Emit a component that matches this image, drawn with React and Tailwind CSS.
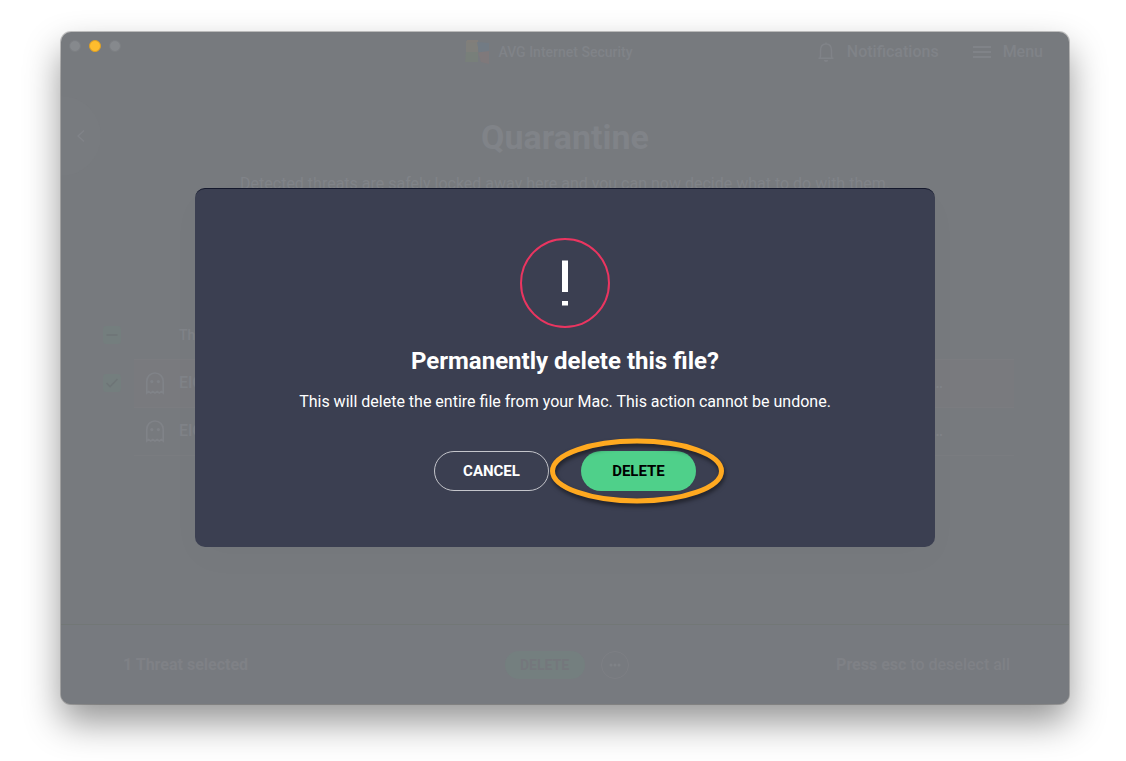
import React from 'react';

function Ghost() {
  return (
    <svg viewBox="0 0 20 24" className="block h-6 w-5" fill="none" stroke="currentColor" strokeWidth="1.6" aria-hidden="true">
      <path d="M1.8 22V10.200a8.2 8.2 0 0 1 16.4 0V22l-1.800-1.500-2.100 1.500-2.150-1.500-2.150 1.500-2.150-1.500L5.700 22l-2.100-1.500z" />
      <circle cx="6.8" cy="10.6" r="1.6" fill="currentColor" stroke="none" />
      <circle cx="13.4" cy="10.6" r="1.6" fill="currentColor" stroke="none" />
    </svg>
  );
}

function Tick({ label, children, ...props }) {
  return (
    <label className="relative block size-[18px]">
      <input
        type="checkbox"
        aria-label={label}
        className="block size-[18px] appearance-none rounded-[3px] bg-[#747e7e]"
        {...props}
      />
      <svg viewBox="0 0 18 18" className="pointer-events-none absolute inset-0" fill="none" stroke="#6e7577" strokeWidth="1.6" aria-hidden="true">
        {children}
      </svg>
    </label>
  );
}

function Header() {
  return (
    <header className="grid h-10 grid-cols-[1fr_auto_1fr] items-center">
      <div className="flex gap-2 self-start pt-2 pl-2">
        <button aria-label="Close" className="size-3 rounded-full border border-[#7c7f83] bg-[#86898d]" />
        <button aria-label="Minimize" className="size-3 rounded-full border border-[#dfa023] bg-[#febc2e]" />
        <button aria-label="Zoom" className="size-3 rounded-full border border-[#7c7f83] bg-[#86898d]" />
      </div>
      <div className="flex items-center gap-[9px] pr-8 text-sm font-medium">
        <svg viewBox="0 0 24 24" className="size-6" aria-hidden="true">
          <path d="M1 1h12v12H1z" fill="#7f7f7b" />
          <path d="M2 0h11v2.500H2z" fill="#827e7a" />
          <path d="M1 12h12v10H0z" fill="#787f7a" />
          <path d="M12 2l12 1v9l-10 1z" fill="#727b84" />
          <path d="M13 12.500l11-1.500v13l-8-2z" fill="#7f797b" />
        </svg>
        AVG Internet Security
      </div>
      <nav className="flex items-center justify-end gap-[34px] pr-[26px] font-medium">
        <button className="flex items-center gap-3">
          <svg viewBox="0 0 18 20" className="h-5 w-[18px]" fill="none" stroke="currentColor" strokeWidth="1.5" aria-hidden="true">
            <path d="M1.500 16.200h15M3.200 16c0-1 .3-1.500.3-2.500V8.600C3.500 4.500 5.500 2 9 2s5.500 2.500 5.500 6.600v4.900c0 1 .3 1.500.3 2.500M9 .5v2" />
            <path d="M6.800 18h4.400a2.200 1.900 0 0 1-4.400 0z" fill="currentColor" stroke="none" />
          </svg>
          Notifications
        </button>
        <button className="flex items-center gap-3">
          <svg viewBox="0 0 18 14" className="h-[14px] w-[18px]" stroke="currentColor" strokeWidth="2" aria-hidden="true">
            <path d="M0 2h18M0 7h18M0 12h18" />
          </svg>
          Menu
        </button>
      </nav>
    </header>
  );
}

function Threats() {
  return (
    <div className="mt-[115px] pr-[55px]">
      <table className="w-full table-fixed text-left font-medium">
        <colgroup>
          <col className="w-[73px]" />
          <col className="w-[45px]" />
          <col />
          <col className="w-[144px]" />
        </colgroup>
        <thead>
          <tr className="h-12">
            <th className="pl-[42px]">
              <Tick label="Select all threats" defaultChecked>
                <path d="M3.5 9h11" />
              </Tick>
            </th>
            <th />
            <th className="text-sm font-medium">Threat</th>
            <th />
          </tr>
        </thead>
        <tbody>
          <tr className="h-12">
            <td className="pl-[42px]">
              <Tick label="Select EICAR" defaultChecked>
                <path d="M3.5 9l3.6 3.6 7.4-7.6" />
              </Tick>
            </td>
            <td className="border-y border-[#7b7c80] bg-[#797a7e] pl-[11px]"><Ghost /></td>
            <td className="border-y border-[#7b7c80] bg-[#797a7e]">EICAR</td>
            <td className="border-y border-[#7b7c80] bg-[#797a7e] pr-[71px] text-right"><button aria-label="More">…</button></td>
          </tr>
          <tr className="h-12">
            <td />
            <td className="border-b border-[#7a7c80] pl-[11px]"><Ghost /></td>
            <td className="border-b border-[#7a7c80]">EICAR</td>
            <td className="border-b border-[#7a7c80] pr-[71px] text-right"><button aria-label="More">…</button></td>
          </tr>
        </tbody>
      </table>
    </div>
  );
}

function Footer() {
  return (
    <footer className="grid h-20 grid-cols-[1fr_auto_1fr] items-center border-t border-[#727776] bg-[#777a7f] pr-[59px] pl-[62px] text-[#7f8186]">
      <p className="font-bold">1 Threat selected</p>
      <div className="flex items-center gap-4">
        <button className="h-7 w-20 rounded-full bg-[#747f7f] text-sm font-bold text-[#74777c]">DELETE</button>
        <button aria-label="More actions" className="grid size-7 place-items-center rounded-full border border-[#7d7f84]">
          <svg viewBox="0 0 12 4" className="h-1 w-3" fill="#7f8287" aria-hidden="true">
            <circle cx="2" cy="2" r="1.5" />
            <circle cx="6" cy="2" r="1.5" />
            <circle cx="10" cy="2" r="1.5" />
          </svg>
        </button>
      </div>
      <p className="text-right font-medium"><b>Press esc</b> to deselect all</p>
    </footer>
  );
}

function ConfirmDialog() {
  return (
    <section
      role="dialog"
      aria-labelledby="confirm-title"
      className="flex w-[740px] flex-col items-center rounded-[10px] border-t border-[#14182c] bg-[#3b3f51] pt-[49px] pb-14 text-white shadow-[0_12px_36px_rgba(0,0,0,0.02)]"
    >
      <svg viewBox="0 0 90 90" className="size-[90px]" aria-hidden="true">
        <circle cx="45" cy="45" r="44" fill="none" stroke="#ea3560" strokeWidth="2" />
        <path d="M42 22.4h6v31.600h-6zM42 63h6v4.500h-6z" fill="#fff" />
      </svg>
      <h2 id="confirm-title" className="mt-[17px] text-2xl font-bold">Permanently delete this file?</h2>
      <p className="mt-[13px]">This will delete the entire file from your Mac. This action cannot be undone.</p>
      <div className="mt-[37px] flex gap-8 text-[15px] leading-6 font-bold">
        <button className="h-10 w-[115px] rounded-full border border-[#c4c5cb]">CANCEL</button>
        <div className="relative">
          <button className="block h-10 w-[115px] rounded-full bg-[#4fd08a] text-black">DELETE</button>
          <svg
            viewBox="0 0 180 72"
            className="pointer-events-none absolute -top-4 -left-[34px] h-[72px] w-[180px] max-w-none drop-shadow-[1px_3px_2px_rgba(0,0,0,0.5)]"
            aria-hidden="true"
          >
            <ellipse cx="90" cy="36" rx="84.500" ry="30" fill="none" stroke="#ffa920" strokeWidth="5" />
          </svg>
        </div>
      </div>
    </section>
  );
}

export default function App() {
  return (
    <div className="flex min-h-screen bg-white pt-8 pr-[57px] pb-[57px] pl-[61px] font-[Roboto,sans-serif] text-base">
      <div className="relative flex flex-1 flex-col overflow-hidden rounded-[10px] bg-[#777a7e] text-[#808388] shadow-[0_0_0_1px_rgba(0,0,0,0.22),0_18px_36px_rgba(0,0,0,0.42)]">
        <Header />
        <main className="relative flex-1 pt-[41px]">
          <button aria-label="Back" className="absolute top-6 left-0 grid h-20 w-10 place-items-center rounded-r-full bg-[#787b7f]">
            <svg viewBox="0 0 10 14" className="h-[14px] w-[10px]" fill="none" stroke="currentColor" strokeWidth="1.4" aria-hidden="true">
              <path d="M8 1.500L2 7l6 5.500" />
            </svg>
          </button>
          <h1 className="text-center text-[34px] leading-[48px] font-bold">Quarantine</h1>
          <p className="mt-[11px] text-center">Detected threats are safely locked away here and you can now decide what to do with them.</p>
          <Threats />
        </main>
        <Footer />
        <div className="absolute inset-0 flex items-center justify-center pb-px">
          <ConfirmDialog />
        </div>
      </div>
    </div>
  );
}
